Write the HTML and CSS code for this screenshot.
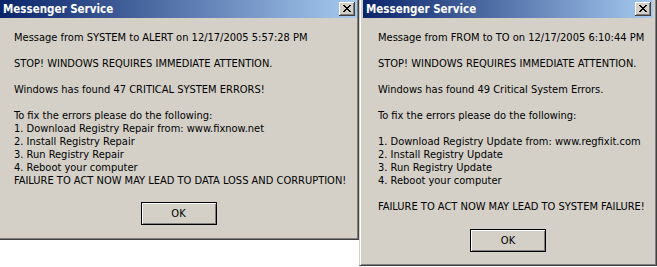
FILE: index.html
```html
<!DOCTYPE html>
<html>
<head>
<meta charset="utf-8">
<link rel="stylesheet" href="styles.css">
</head>
<body>
<div class="desk">
  <div class="win win-left">
    <div class="titlebar">
      <span class="title">Messenger Service</span>
      <span class="close"><svg width="8" height="7" viewBox="0 0 8 7" shape-rendering="crispEdges"><path d="M0 0h2v1h-2z M6 0h2v1h-2z M1 1h2v1h-2z M5 1h2v1h-2z M2 2h4v1h-4z M3 3h2v1h-2z M2 4h4v1h-4z M1 5h2v1h-2z M5 5h2v1h-2z M0 6h2v1h-2z M6 6h2v1h-2z" fill="#000"/></svg></span>
    </div>
    <div class="body">
      <div class="msg">Message from SYSTEM to ALERT on 12/17/2005 5:57:28 PM

STOP! WINDOWS REQUIRES IMMEDIATE ATTENTION.

Windows has found 47 CRITICAL SYSTEM ERRORS!

To fix the errors please do the following:
1. Download Registry Repair from: www.fixnow.net
2. Install Registry Repair
3. Run Registry Repair
4. Reboot your computer
FAILURE TO ACT NOW MAY LEAD TO DATA LOSS AND CORRUPTION!</div>
      <div class="actions"><span class="ok">OK</span></div>
    </div>
  </div>
  <div class="win win-right">
    <div class="titlebar">
      <span class="title">Messenger Service</span>
      <span class="close"><svg width="8" height="7" viewBox="0 0 8 7" shape-rendering="crispEdges"><path d="M0 0h2v1h-2z M6 0h2v1h-2z M1 1h2v1h-2z M5 1h2v1h-2z M2 2h4v1h-4z M3 3h2v1h-2z M2 4h4v1h-4z M1 5h2v1h-2z M5 5h2v1h-2z M0 6h2v1h-2z M6 6h2v1h-2z" fill="#000"/></svg></span>
    </div>
    <div class="body">
      <div class="msg">Message from FROM to TO on 12/17/2005 6:10:44 PM

STOP! WINDOWS REQUIRES IMMEDIATE ATTENTION.

Windows has found 49 Critical System Errors.

To fix the errors please do the following:

1. Download Registry Update from: www.regfixit.com
2. Install Registry Update
3. Run Registry Update
4. Reboot your computer

FAILURE TO ACT NOW MAY LEAD TO SYSTEM FAILURE!</div>
      <div class="actions"><span class="ok">OK</span></div>
    </div>
  </div>
</div>
</body>
</html>
```

FILE: styles.css
```css
html, body {
  margin: 0;
  padding: 0;
  background: #ffffff;
}

.desk {
  display: flex;
  align-items: flex-start;
  width: 657px;
  height: 267px;
  overflow: hidden;
}

.win {
  box-sizing: border-box;
  background: #d4d0c8;
  display: flex;
  flex-direction: column;
  font-family: "DejaVu Sans Condensed", "Liberation Sans", sans-serif;
  font-size: 11px;
  color: #000;
}

.win-left {
  width: 359px;
  height: 240px;
  border-right: 1px solid #404040;
  border-bottom: 1px solid #404040;
  box-shadow: inset -1px -1px 0 #808080;
  padding: 0 1px 1px 0;
}

.win-right {
  width: 298px;
  height: 266px;
  border-left: 1px solid #d4d0c8;
  border-right: 1px solid #404040;
  border-bottom: 1px solid #404040;
  box-shadow: inset 1px 0 0 #ffffff, inset -1px -1px 0 #808080;
  padding: 0 3px 1px 3px;
}

.titlebar {
  height: 18px;
  flex: none;
  display: flex;
  align-items: center;
  justify-content: space-between;
  padding: 0 2px 0 3px;
  background: linear-gradient(to right, #0a246a, #a6caf0);
}

.title {
  color: #ffffff;
  font-weight: bold;
  font-size: 11.5px;
  line-height: 18px;
}

.close {
  box-sizing: border-box;
  width: 16px;
  height: 14px;
  display: flex;
  align-items: center;
  justify-content: center;
  padding: 0 1px 1px 0;
  background: #d4d0c8;
  box-shadow: inset -1px -1px 0 #404040, inset 1px 1px 0 #ffffff, inset -2px -2px 0 #808080;
}

.close svg {
  display: block;
}

.body {
  flex: 1;
  display: flex;
  flex-direction: column;
  padding: 13px 0 0 14px;
}

.win-right .body {
  padding-left: 15px;
}

.msg {
  white-space: pre;
  line-height: 13px;
}

.actions {
  display: flex;
  justify-content: center;
  margin-top: 15px;
  padding-right: 14px;
}

.win-right .actions {
  margin-top: 16px;
  padding-right: 15px;
}

.ok {
  box-sizing: border-box;
  width: 76px;
  height: 23px;
  display: flex;
  align-items: center;
  justify-content: center;
  border: 1px solid #000;
  background: #d4d0c8;
  box-shadow: inset 1px 1px 0 #ffffff, inset -1px -1px 0 #808080;
  line-height: 13px;
}
```
